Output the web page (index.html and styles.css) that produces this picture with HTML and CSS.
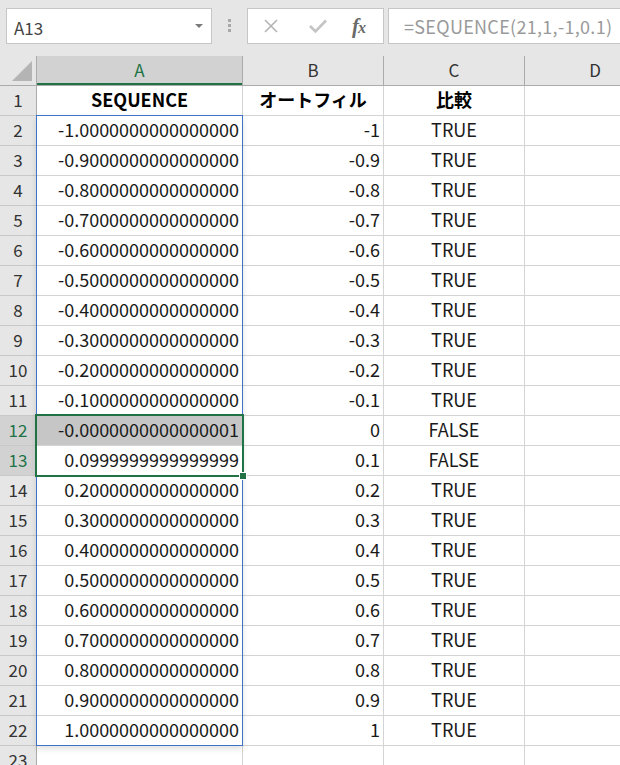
FILE: index.html
```html
<!DOCTYPE html>
<html>
<head>
<meta charset="utf-8">
<link rel="stylesheet" href="styles.css">
</head>
<body>
<div class="app">
  <div class="toolbar">
    <div class="namebox"><span class="ref">A13</span><span class="caret"></span></div>
    <div class="grip"><i></i><i></i><i></i></div>
    <div class="fxbox">
      <svg class="ic" width="18" height="18" viewBox="0 0 18 18"><path d="M3 3 L15 15 M15 3 L3 15" stroke="#b4b4b4" stroke-width="1.6" fill="none"/></svg>
      <svg class="ic" width="20" height="18" viewBox="0 0 20 18"><path d="M2 9 L7.5 14.5 L18 3.5" stroke="#c4c4c4" stroke-width="2.6" fill="none"/></svg>
      <span class="fx">f<span class="fxx">x</span></span>
    </div>
    <div class="formula">=SEQUENCE(21,1,-1,0.1)</div>
  </div>
  <div class="sheet">
    <div class="row hdr">
      <div class="corner"><span class="tri"></span></div>
      <div class="ch active">A</div>
      <div class="ch">B</div>
      <div class="ch">C</div>
      <div class="ch">D</div>
    </div>
    <div class="row">
      <div class="rh">1</div>
      <div class="c ctr bold">SEQUENCE</div>
      <div class="c ctr bold">オートフィル</div>
      <div class="c ctr bold">比較</div>
      <div class="c"></div>
    </div>
    <div class="row"><div class="rh">2</div><div class="c num">-1.0000000000000000</div><div class="c num">-1</div><div class="c ctr">TRUE</div><div class="c"></div></div>
    <div class="row"><div class="rh">3</div><div class="c num">-0.9000000000000000</div><div class="c num">-0.9</div><div class="c ctr">TRUE</div><div class="c"></div></div>
    <div class="row"><div class="rh">4</div><div class="c num">-0.8000000000000000</div><div class="c num">-0.8</div><div class="c ctr">TRUE</div><div class="c"></div></div>
    <div class="row"><div class="rh">5</div><div class="c num">-0.7000000000000000</div><div class="c num">-0.7</div><div class="c ctr">TRUE</div><div class="c"></div></div>
    <div class="row"><div class="rh">6</div><div class="c num">-0.6000000000000000</div><div class="c num">-0.6</div><div class="c ctr">TRUE</div><div class="c"></div></div>
    <div class="row"><div class="rh">7</div><div class="c num">-0.5000000000000000</div><div class="c num">-0.5</div><div class="c ctr">TRUE</div><div class="c"></div></div>
    <div class="row"><div class="rh">8</div><div class="c num">-0.4000000000000000</div><div class="c num">-0.4</div><div class="c ctr">TRUE</div><div class="c"></div></div>
    <div class="row"><div class="rh">9</div><div class="c num">-0.3000000000000000</div><div class="c num">-0.3</div><div class="c ctr">TRUE</div><div class="c"></div></div>
    <div class="row"><div class="rh">10</div><div class="c num">-0.2000000000000000</div><div class="c num">-0.2</div><div class="c ctr">TRUE</div><div class="c"></div></div>
    <div class="row"><div class="rh">11</div><div class="c num">-0.1000000000000000</div><div class="c num">-0.1</div><div class="c ctr">TRUE</div><div class="c"></div></div>
    <div class="row"><div class="rh sel">12</div><div class="c num fill">-0.0000000000000001</div><div class="c num">0</div><div class="c ctr">FALSE</div><div class="c"></div></div>
    <div class="row"><div class="rh sel">13</div><div class="c num">0.0999999999999999</div><div class="c num">0.1</div><div class="c ctr">FALSE</div><div class="c"></div></div>
    <div class="row"><div class="rh">14</div><div class="c num">0.2000000000000000</div><div class="c num">0.2</div><div class="c ctr">TRUE</div><div class="c"></div></div>
    <div class="row"><div class="rh">15</div><div class="c num">0.3000000000000000</div><div class="c num">0.3</div><div class="c ctr">TRUE</div><div class="c"></div></div>
    <div class="row"><div class="rh">16</div><div class="c num">0.4000000000000000</div><div class="c num">0.4</div><div class="c ctr">TRUE</div><div class="c"></div></div>
    <div class="row"><div class="rh">17</div><div class="c num">0.5000000000000000</div><div class="c num">0.5</div><div class="c ctr">TRUE</div><div class="c"></div></div>
    <div class="row"><div class="rh">18</div><div class="c num">0.6000000000000000</div><div class="c num">0.6</div><div class="c ctr">TRUE</div><div class="c"></div></div>
    <div class="row"><div class="rh">19</div><div class="c num">0.7000000000000000</div><div class="c num">0.7</div><div class="c ctr">TRUE</div><div class="c"></div></div>
    <div class="row"><div class="rh">20</div><div class="c num">0.8000000000000000</div><div class="c num">0.8</div><div class="c ctr">TRUE</div><div class="c"></div></div>
    <div class="row"><div class="rh">21</div><div class="c num">0.9000000000000000</div><div class="c num">0.9</div><div class="c ctr">TRUE</div><div class="c"></div></div>
    <div class="row"><div class="rh">22</div><div class="c num">1.0000000000000000</div><div class="c num">1</div><div class="c ctr">TRUE</div><div class="c"></div></div>
    <div class="row"><div class="rh">23</div><div class="c"></div><div class="c"></div><div class="c"></div><div class="c"></div></div>
    <div class="spill"></div>
    <div class="selection"><span class="handle"></span></div>
  </div>
</div>
</body>
</html>
```

FILE: styles.css
```css
html, body {
  margin: 0;
  padding: 0;
  background: #ffffff;
  overflow: hidden;
}
.app {
  width: 620px;
  height: 765px;
  overflow: hidden;
  font-family: "Noto Sans CJK JP", "Noto Sans", sans-serif;
  color: #1a1a1a;
}
.toolbar {
  height: 56px;
  box-sizing: border-box;
  background: #e6e6e6;
  display: flex;
  align-items: flex-start;
  padding-top: 8px;
  padding-left: 6px;
  white-space: nowrap;
}
.namebox {
  width: 206px;
  height: 36px;
  box-sizing: border-box;
  background: #fff;
  border: 1px solid #c6c6c6;
  display: flex;
  align-items: center;
  justify-content: space-between;
  padding: 0 8px 0 7px;
}
.ref {
  font-size: 17px;
  color: #444;
  line-height: 1;
  padding-top: 3px;
}
.caret {
  width: 0;
  height: 0;
  border-left: 4px solid transparent;
  border-right: 4px solid transparent;
  border-top: 4px solid #7a7a7a;
}
.grip {
  width: 4px;
  margin: 11px 15px 0 16px;
  display: flex;
  flex-direction: column;
  gap: 2px;
}
.grip i {
  display: block;
  width: 3px;
  height: 3px;
  background: #a8a8a8;
}
.fxbox {
  width: 137px;
  height: 36px;
  box-sizing: border-box;
  background: #fff;
  border: 1px solid #c6c6c6;
  display: flex;
  align-items: center;
  padding-left: 14px;
  gap: 0;
}
.fxbox .ic:nth-child(1) { margin-right: 28px; }
.fxbox .ic:nth-child(2) { margin-right: 24px; }
.fx {
  font-family: "Liberation Serif", serif;
  font-style: italic;
  font-weight: bold;
  font-size: 21px;
  color: #6a6a6a;
  letter-spacing: -1px;
}
.fxx { font-size: 16px; }
.formula {
  margin-left: 4px;
  flex: 1;
  height: 36px;
  box-sizing: border-box;
  background: #fff;
  border: 1px solid #c6c6c6;
  border-right: none;
  font-size: 18px;
  letter-spacing: 0.3px;
  color: #9a9a9a;
  padding-left: 15px;
  display: flex;
  align-items: center;
  overflow: hidden;
}
.sheet {
  position: relative;
}
.row {
  display: grid;
  grid-template-columns: 37px 206px 141px 141px 141px;
  height: 30px;
}
.row > div {
  box-sizing: border-box;
  border-right: 1px solid #d4d4d4;
  border-bottom: 1px solid #d4d4d4;
  display: flex;
  align-items: center;
  font-size: 18px;
  line-height: 1;
  padding-bottom: 3px;
  white-space: nowrap;
  overflow: hidden;
}
.hdr > div {
  background: #e6e6e6;
  border-right: 1px solid #ababab;
  border-bottom: 1px solid #ababab;
  justify-content: center;
  color: #333;
  font-size: 17px;
}
.corner {
  position: relative;
}
.tri {
  position: absolute;
  right: 4px;
  bottom: 4px;
  width: 0;
  height: 0;
  border-left: 20px solid transparent;
  border-bottom: 20px solid #b4b4b4;
}
.ch.active {
  background: #d2d2d2;
  color: #217346;
  box-shadow: inset 0 -2px 0 #217346;
}
.row > .rh {
  background: #e6e6e6;
  border-right: 1px solid #ababab;
  border-bottom: 1px solid #c8c8c8;
  justify-content: center;
  color: #333;
  font-size: 17px;
}
.row > .rh.sel {
  background: #d2d2d2;
  color: #217346;
}
.num {
  justify-content: flex-end;
  padding-right: 3px;
}
.ctr {
  justify-content: center;
}
.row > .bold {
  font-weight: bold;
  color: #000;
}
.row > .fill {
  background: #c6c6c6;
}
.spill {
  position: absolute;
  left: 36px;
  top: 59px;
  width: 207px;
  height: 631px;
  box-sizing: border-box;
  border: 1px solid #3f73c8;
  box-shadow: 0 3px 6px rgba(0, 0, 0, 0.12);
  pointer-events: none;
}
.selection {
  position: absolute;
  left: 35px;
  top: 358px;
  width: 209px;
  height: 63px;
  box-sizing: border-box;
  border: 2px solid #217346;
  pointer-events: none;
}
.handle {
  position: absolute;
  right: -5px;
  bottom: -5px;
  width: 6px;
  height: 6px;
  background: #217346;
  border: 1px solid #fff;
}
```
